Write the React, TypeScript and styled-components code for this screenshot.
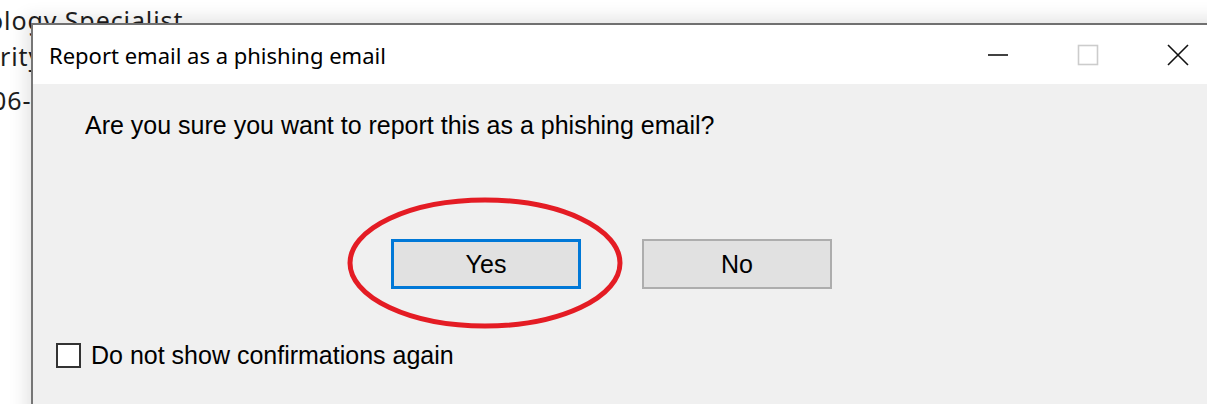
import React from 'react';
import styled, { createGlobalStyle } from 'styled-components';

const GlobalStyle = createGlobalStyle`
	html, body {
		margin: 0;
		padding: 0;
		background: #ffffff;
		overflow: hidden;
	}
`;

const Desktop = styled.div`
	position: relative;
	width: 1207px;
	height: 404px;
	overflow: hidden;
	background: #ffffff;
`;

// the document lying under the dialog
const BackDoc = styled.div`
	display: flex;
	flex-direction: column;
	font-family: "Noto Sans", "Open Sans", sans-serif;
	font-size: 25px;
	letter-spacing: 0.9px;
	line-height: 40px;
	color: #1e1e1e;
	white-space: nowrap;
`;

const DocLine = styled.div<{ $shift: number; $lift?: number }>`
	margin-left: ${p => p.$shift}px;
	margin-top: ${p => -(p.$lift ?? 0)}px;
`;

const Dialog = styled.div`
	position: absolute;
	left: 31px;
	top: 23px;
	width: 1190px;
	height: 400px;
	display: flex;
	flex-direction: column;
	background: #f0f0f0;
	border-left: 2px solid #767676;
	border-top: 2px solid #707070;
	box-shadow: 0 0 16px 6px rgba(0, 0, 0, 0.1);
`;

const TitleBar = styled.div`
	height: 59px;
	flex-shrink: 0;
	display: flex;
	align-items: center;
	background: #ffffff;
`;

const Title = styled.div`
	flex: 1;
	padding-left: 16px;
	font-family: "Noto Sans", "Open Sans", sans-serif;
	font-size: 22px;
	color: #000000;
	white-space: nowrap;
`;

const Controls = styled.div`
	display: flex;
	height: 100%;
`;

const ControlButton = styled.div`
	width: 90px;
	height: 100%;
	display: flex;
	align-items: center;
	justify-content: center;
`;

const Body = styled.div`
	flex: 1;
	display: flex;
	flex-direction: column;
	font-family: "Liberation Sans", Arial, sans-serif;
	color: #000000;
`;

const Question = styled.div`
	margin: 27px 0 0 52px;
	font-size: 25px;
	line-height: 29px;
`;

const ButtonRow = styled.div`
	display: flex;
	gap: 61px;
	margin: 99px 0 0 358px;
`;

const DialogButton = styled.div<{ $focused?: boolean }>`
	box-sizing: border-box;
	width: 190px;
	height: 50px;
	display: flex;
	align-items: center;
	justify-content: center;
	background: #e1e1e1;
	border: ${p => (p.$focused ? '3px solid #0078d7' : '2px solid #adadad')};
	font-size: 25px;
`;

const CheckRow = styled.label`
	display: flex;
	align-items: center;
	gap: 10px;
	margin: 52px 0 0 23px;
	font-size: 25px;
`;

const CheckBox = styled.span`
	box-sizing: border-box;
	width: 25px;
	height: 25px;
	background: #ffffff;
	border: 2px solid #333333;
`;

// hand-drawn circle marking the Yes button
const Marker = styled.svg`
	position: absolute;
	left: 346px;
	top: 196px;
	pointer-events: none;
`;

const MinimizeIcon = () => (
	<svg width="22" height="22" viewBox="0 0 22 22">
		<line x1="1" y1="11" x2="21" y2="11" stroke="#111" strokeWidth="1.6" />
	</svg>
);

const MaximizeIcon = () => (
	<svg width="22" height="22" viewBox="0 0 22 22">
		<rect x="1.5" y="1.5" width="19" height="19" fill="none" stroke="#cccccc" strokeWidth="1.6" />
	</svg>
);

const CloseIcon = () => (
	<svg width="22" height="22" viewBox="0 0 22 22">
		<path d="M1 1 L21 21 M21 1 L1 21" stroke="#111" strokeWidth="1.6" />
	</svg>
);

const App = () => (
	<Desktop>
		<GlobalStyle />
		<BackDoc>
			<DocLine $shift={-12}>ology Specialist</DocLine>
			<DocLine $shift={-15} $lift={4}>arity Services</DocLine>
			<DocLine $shift={-8} $lift={-4}>06-555-0142</DocLine>
		</BackDoc>

		<Dialog>
			<TitleBar>
				<Title>Report email as a phishing email</Title>
				<Controls>
					<ControlButton><MinimizeIcon /></ControlButton>
					<ControlButton><MaximizeIcon /></ControlButton>
					<ControlButton><CloseIcon /></ControlButton>
				</Controls>
			</TitleBar>
			<Body>
				<Question>Are you sure you want to report this as a phishing email?</Question>
				<ButtonRow>
					<DialogButton $focused>Yes</DialogButton>
					<DialogButton>No</DialogButton>
				</ButtonRow>
				<CheckRow>
					<CheckBox />
					Do not show confirmations again
				</CheckRow>
			</Body>
		</Dialog>

		<Marker width="278" height="134" viewBox="0 0 278 134">
			<ellipse cx="139" cy="67" rx="135" ry="63" fill="none" stroke="#e41c24" strokeWidth="5" />
		</Marker>
	</Desktop>
);

export default App;
